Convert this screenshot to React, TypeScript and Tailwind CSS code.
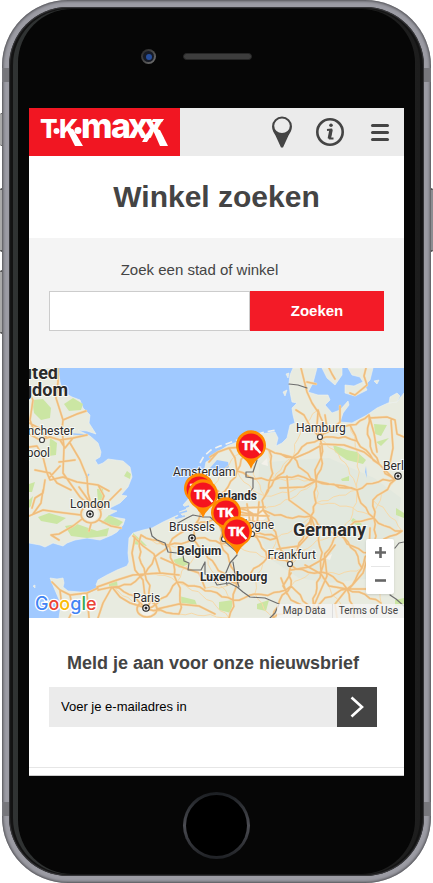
import React from "react";

type Point = [number, number];

const CITIES: Record<string, Point> = {
  amsterdam: [185, 117], groningen: [222, 76], zwolle: [208, 103], utrecht: [190, 127],
  rotterdam: [172, 134], antwerp: [166, 157], brussels: [164, 171], lille: [140, 177],
  calais: [112, 167], rouen: [84, 219], amiens: [116, 206], paris: [118, 241],
  reims: [148, 214], liege: [192, 176], eindhoven: [190, 148], cologne: [223, 166],
  ruhr: [224, 146], munster: [236, 128], osnabruck: [245, 112], bremen: [264, 89],
  hamburg: [291, 71], kiel: [289, 42], hannover: [287, 113], lubeck: [304, 60],
  rostock: [340, 47], berlin: [366, 112], magdeburg: [328, 122], leipzig: [345, 150],
  erfurt: [310, 166], kassel: [282, 148], frankfurt: [262, 197], mannheim: [262, 218],
  koblenz: [238, 190], luxembourg: [208, 216], metz: [204, 232], saarbrucken: [226, 226],
  wurzburg: [292, 204], nuremberg: [318, 221], stuttgart: [283, 242], siegen: [248, 170],
  namur: [176, 184], nancy: [200, 250], troyes: [150, 246], bayreuth: [333, 200],
  hof: [341, 185], dresden: [373, 163], strasbourg: [244, 250], munich: [325, 250],
  regensburg: [352, 235], emden: [240, 82], dortmund: [234, 142], gottingen: [287, 135],
  wismar: [321, 57], schwerin: [328, 73], dessau: [344, 132], neuruppin: [350, 96],
};

const LINKS: string[] = [
  "amsterdam-utrecht", "amsterdam-rotterdam", "rotterdam-utrecht", "utrecht-zwolle",
  "zwolle-groningen", "groningen-emden", "utrecht-eindhoven", "rotterdam-antwerp",
  "antwerp-brussels", "antwerp-eindhoven", "eindhoven-ruhr", "antwerp-lille",
  "brussels-lille", "lille-calais", "calais-amiens", "amiens-paris", "lille-amiens",
  "lille-reims", "reims-paris", "rouen-amiens", "rouen-paris", "brussels-namur",
  "namur-luxembourg", "brussels-liege", "liege-cologne", "eindhoven-liege",
  "liege-luxembourg", "luxembourg-metz", "metz-nancy", "metz-saarbrucken", "metz-reims",
  "reims-troyes", "saarbrucken-mannheim", "mannheim-frankfurt", "mannheim-stuttgart",
  "mannheim-strasbourg", "koblenz-frankfurt", "koblenz-cologne", "koblenz-luxembourg",
  "cologne-ruhr", "ruhr-dortmund", "dortmund-munster", "munster-osnabruck",
  "osnabruck-bremen", "bremen-hamburg", "hamburg-kiel", "hamburg-lubeck", "lubeck-wismar",
  "wismar-rostock", "hamburg-hannover", "bremen-hannover", "hannover-magdeburg",
  "magdeburg-berlin", "hannover-osnabruck", "osnabruck-zwolle", "utrecht-ruhr",
  "emden-bremen", "emden-munster", "dortmund-kassel", "kassel-gottingen",
  "gottingen-hannover", "kassel-erfurt", "erfurt-leipzig", "leipzig-dessau",
  "dessau-berlin", "leipzig-magdeburg", "leipzig-dresden", "berlin-neuruppin",
  "neuruppin-schwerin", "schwerin-hamburg", "neuruppin-rostock", "schwerin-wismar",
  "kassel-frankfurt", "kassel-wurzburg", "frankfurt-wurzburg", "wurzburg-nuremberg",
  "wurzburg-stuttgart", "nuremberg-bayreuth", "bayreuth-hof", "hof-leipzig",
  "nuremberg-munich", "nuremberg-regensburg", "stuttgart-strasbourg", "siegen-cologne",
  "siegen-frankfurt", "siegen-dortmund", "erfurt-bayreuth", "erfurt-hof",
  "stuttgart-nuremberg", "paris-troyes", "dresden-hof", "cologne-siegen", "erfurt-wurzburg",
];

const MINOR_LINKS: string[] = [
  "lille-namur", "calais-lille", "amiens-reims", "reims-luxembourg", "troyes-nancy",
  "reims-nancy", "namur-reims", "saarbrucken-koblenz", "saarbrucken-strasbourg",
  "siegen-kassel", "siegen-koblenz", "kassel-hannover", "hannover-dortmund",
  "osnabruck-hannover", "bremen-osnabruck", "bremen-kiel", "magdeburg-wismar",
  "gottingen-magdeburg", "gottingen-leipzig", "erfurt-magdeburg", "bayreuth-wurzburg",
  "regensburg-hof", "wurzburg-munich", "munster-zwolle", "groningen-munster",
  "liege-koblenz", "dessau-dresden", "berlin-leipzig", "hamburg-magdeburg",
  "munster-hannover", "emden-osnabruck", "mannheim-wurzburg", "rouen-troyes",
  "amsterdam-groningen", "rotterdam-eindhoven", "namur-metz", "frankfurt-erfurt",
];

const TRACED_ROADS: string[] = [
  "M29 0L29 14L27 30L34 52L33 62L35 79L34 105L41 115L51 129L60 137",
  "M0 25L4 32L1 52L6 66",
  "M0 66L11 72L21 69L31 72L44 70L58 67",
  "M0 79L8 78L14 89L18 105L21 112L34 109L48 114L69 117L80 123",
  "M6 102L21 105L28 115L42 122M31 98L20 110M41 75L51 92L58 109L59 125L62 136",
  "M16 112L14 125L6 130L3 140M34 52L48 46L57 43M0 55L10 60L18 70M46 92L30 94",
  "M62 136L55 126L50 119M52 147L28 144L14 142L0 148M72 141L82 131L92 121",
  "M70 152L82 158L92 160M62 156L60 163M53 151L44 158L30 166L22 167L30 172",
  "M52 146a10 9 0 1 0 20 0a10 9 0 1 0 -20 0",
  "M14 122L12 135L4 146M69 117L75 128L70 140M31 72L36 80L44 70",
  "M106 169L103 185L106 202L114 212L116 229M104 168L114 178L125 186L131 205",
  "M68 219L88 212L104 207L131 205L150 207",
  "M23 214L31 222L41 227L58 225L69 220M69 222L83 219L91 229L101 235L114 239",
  "M83 219L74 235L69 250M31 222L33 240M41 227L44 242L40 250M58 226L60 250",
  "M108 241a10 8 0 1 0 20 0a10 8 0 1 0 -20 0",
  "M128 241L150 236L170 238L186 246M132 190L150 198L170 205L176 220",
  "M181 89L189 84L200 80L215 79L232 80M189 84L180 94M200 80L206 90L208 103",
  "M212 140L236 139M210 147L240 148M214 153L238 154M218 136L222 160M230 134L228 158",
  "M272 0L275 12L278 24L283 35L289 44L288 58L291 70M278 14L287 16",
  "M267 42L275 47L281 58L291 70M296 47L298 60L304 60M311 38L311 54L304 60",
  "M300 0L303 6L306 11M337 0L335 8L338 17L326 27L321 25",
  "M291 78L280 84L266 90L251 86M291 78L292 90L286 102L287 113M291 76L315 77L335 84L350 96L366 112",
  "M340 47L345 65L348 84M340 50L358 49L366 52L368 66L375 69M362 52L364 80L360 100",
  "M251 120L275 119L287 113L300 116L315 118L328 122M258 108L260 132L282 148",
  "M276 197L292 206L300 218L318 221M262 205L254 218L262 232L283 242M252 210L258 226",
  "M262 202L280 199L296 190L306 177M248 181L270 178L282 165L282 148M296 190L298 208L283 242",
  "M318 221L345 221L361 224M320 221L334 205L340 185L341 160M318 221L306 236L308 250",
];

const GREENS: string[] = [
  "M3 32L14 31L22 40L21 50L12 52L5 45Z", "M35 36L44 30L54 36L52 42L40 43Z",
  "M21 70L28 75L27 87L20 88Z", "M9 149L20 145L37 150L28 156L12 153Z",
  "M36 158L48 156L68 163L80 160L78 168L58 170L42 168Z", "M68 121L74 120L75 134L69 134Z",
  "M80 147L94 154L88 160L72 155Z", "M104 165L112 172L118 178L104 176Z",
  "M80 215L88 213L89 221L80 221Z", "M98 103L102 106L101 111L95 108Z",
  "M144 192L154 189L160 196L150 200Z", "M150 228L166 232L168 237L152 235Z",
  "M190 234L204 232L202 245L190 242Z", "M228 236L240 232L237 243L228 241Z",
  "M304 77L318 82L328 84L337 92L334 96L318 92L306 84Z",
  "M345 56L358 57L352 68L346 66Z", "M347 74L360 70L352 78Z",
  "M367 140L375 145L375 150L367 147Z", "M324 150L333 156L330 159L322 153Z",
  "M366 232L375 230L375 238L366 238Z", "M312 111L320 108L320 113L313 113Z",
  "M0 0L8 0L6 6L0 8Z", "M0 116L6 114L3 124L0 124Z", "M0 132L4 128L2 138L0 140Z",
];

const PINS: Point[] = [[222, 78], [170, 121], [174, 127], [197, 145], [208, 164]];

/** Bends a straight link between two cities into a meandering motorway. */
function meander(link: string, index: number): string {
  const [from, to] = link.split("-").map((name) => CITIES[name]);
  const dx = to[0] - from[0];
  const dy = to[1] - from[1];
  const length = Math.hypot(dx, dy);
  const steps = Math.max(3, Math.round(length / 6));
  let d = `M${from[0]} ${from[1]}`;
  for (let i = 1; i <= steps; i++) {
    const t = i / steps;
    const bow = Math.sin(t * Math.PI) * Math.sin(index * 2.4) * length * 0.1;
    const jitter = i === steps ? 0 : Math.sin(i * 2.1 + index * 1.7) * 1.2;
    const offset = (bow + jitter) / length;
    d += `L${(from[0] + dx * t - dy * offset).toFixed(1)} ${(from[1] + dy * t + dx * offset).toFixed(1)}`;
  }
  return d;
}

const ROADS = [...TRACED_ROADS, ...LINKS.map(meander)].join("");
const MINOR_ROADS = MINOR_LINKS.map(meander).join("");

const UK =
  "M0 0L29 0L31 14L34 24L43 29L51 32L54 40L61 47L60 55L67 66L58 63L49 62L61 68L69 75L72 84L71 89L66 92L69 97L74 95L79 91L94 93L101 99L103 109L99 119L92 127L98 128L91 135L79 141L88 143L78 148L96 151L94 157L88 164L83 167L71 172L58 170L46 172L38 175L34 178L24 175L16 179L11 177L0 175Z";
const CONTINENT =
  "M21 210L28 211L34 210L35 215L34 219L39 223L51 224L63 224L71 220L67 217L69 212L78 207L88 202L98 198L100 194L99 185L100 170L104 165L114 162L123 160L134 154L149 147L146 152L155 149L150 144L158 141L154 137L162 128L170 118L175 104L177 94L181 92L189 84L198 78L208 74L231 66L246 64L249 70L247 78L253 75L258 70L261 57L266 55L264 47L263 40L268 35L263 34L261 24L260 15L261 7L264 0L288 0L284 15L279 24L289 27L299 27L301 32L296 37L303 45L311 42L319 33L320 37L314 45L311 54L323 55L338 47L348 40L359 35L368 34L375 25L375 250L30 250L32 236L26 222Z";
const ISLANDS =
  "M293 0L313 0L313 7L306 17L298 10ZM319 0L344 0L341 12L336 17L331 9L323 7ZM316 17L325 18L334 14L338 22L326 28L316 25ZM345 13L350 12L348 16ZM361 29L368 25L371 28L368 34L360 35ZM254 24L258 22L256 28ZM257 6L260 5L259 10ZM4 218L6 217L6 220Z";
const BORDERS =
  "M228 92L224 104L217 104L217 109L224 110L224 120L220 125L206 130L208 142L202 152L194 160L195 172M121 160L123 168L128 172L136 175L139 184L148 185L154 187L155 193L160 195L159 202L172 202L176 194L176 206L184 210L188 217L200 215L208 219L214 224L221 229L236 230L250 236L246 245L241 250M208 187L201 195L196 207L198 217M204 194L206 206L210 219M149 155L158 150L164 147L174 149L181 149L193 159L194 172L208 184M260 16L269 17L278 20M375 174L370 175L366 180M361 227L367 231L375 238";

interface MapLabelProps {
  x: number;
  y: number;
  children: string;
  kind?: "city" | "country" | "large";
  end?: boolean;
}

function MapLabel({ x, y, children, kind = "city", end = false }: MapLabelProps) {
  const style = {
    city: "text-[12px] font-normal",
    country: "text-[12px] font-bold",
    large: "text-[18px] font-bold",
  }[kind];
  return (
    <text
      x={x}
      y={y}
      textAnchor={end ? "end" : "start"}
      fill="#2b2b2b"
      stroke="#fff"
      strokeOpacity="0.75"
      strokeWidth="2"
      paintOrder="stroke"
      className={style}
    >
      {children}
    </text>
  );
}

function StoreMap() {
  return (
    <svg
      viewBox="0 0 375 250"
      preserveAspectRatio="xMidYMid slice"
      role="img"
      aria-label="Kaart met winkels"
      className="block h-full w-full font-[Roboto,sans-serif]"
    >
      <rect width="375" height="250" fill="#a0c9ff" />
      <g fill="#e8ebe0" stroke="#f2f3ec" strokeWidth="0.6">
        <path d={UK} />
        <path d={CONTINENT} />
        <path d={ISLANDS} />
      </g>
      <path d="M230 95L262 92L300 90L345 110L372 130L368 165L345 210L300 215L270 210L240 190L228 160Z" fill="#e2e8de" />
      <path d="M188 92L199 94L200 99L193 105L184 107L181 100ZM337 98L338 110L336 104Z" fill="#a0c9ff" />
      <path d="M171 95L175 88L182 82L191 78L200 75L214 70L236 64L248 62" fill="none" stroke="#f4f3ee" strokeWidth="1.6" strokeDasharray="7 4" />
      <path d="M148 146L158 143M151 141L160 138M146 150L156 148M57 110L60 106M44 66L58 67" fill="none" stroke="#a0c9ff" strokeWidth="1.5" />
      <g fill="#cbe6a3">
        {GREENS.map((d) => (
          <path key={d} d={d} />
        ))}
      </g>
      <g fill="#f3f1ea">
        <circle cx="62" cy="146" r="7" />
        <circle cx="118" cy="241" r="7" />
        <ellipse cx="226" cy="146" rx="12" ry="8" />
        <path d="M232 96L238 90L239 98ZM295 190L303 186L301 192ZM18 107L26 110L22 114Z" />
      </g>
      <g fill="none" strokeLinejoin="round" strokeLinecap="round">
        <path d={MINOR_ROADS} stroke="#f7d9a8" strokeWidth="1" />
        <path d={ROADS} stroke="#f6dcb0" strokeWidth="2.4" />
        <path d={ROADS} stroke="#efbd7e" strokeWidth="1.5" />
        <path d={BORDERS} stroke="#6e6e6e" strokeWidth="1.2" />
      </g>
      <g fill="#fff" stroke="#444" strokeWidth="1.2">
        {([[13, 72], [291, 69], [261, 196], [223, 166], [195, 171]] as Point[]).map(([x, y]) => (
          <circle key={x} cx={x} cy={y} r="2.5" />
        ))}
      </g>
      {([[61, 146], [117, 240], [163, 170], [369, 108]] as Point[]).map(([x, y]) => (
        <g key={x}>
          <circle cx={x} cy={y} r="3.2" fill="#fff" stroke="#222" strokeWidth="1.2" />
          <circle cx={x} cy={y} r="1.5" fill="#222" />
        </g>
      ))}
      <MapLabel x={29} y={11} kind="large" end>United</MapLabel>
      <MapLabel x={39} y={28} kind="large" end>Kingdom</MapLabel>
      <MapLabel x={45} y={67} end>Manchester</MapLabel>
      <MapLabel x={21} y={89} end>Liverpool</MapLabel>
      <MapLabel x={41} y={140}>London</MapLabel>
      <MapLabel x={104} y={234}>Paris</MapLabel>
      <MapLabel x={144} y={108}>Amsterdam</MapLabel>
      <MapLabel x={228} y={132} kind="country" end>Netherlands</MapLabel>
      <MapLabel x={140} y={163}>Brussels</MapLabel>
      <MapLabel x={148} y={187} kind="country">Belgium</MapLabel>
      <MapLabel x={171} y={213} kind="country">Luxembourg</MapLabel>
      <MapLabel x={245} y={161} end>Cologne</MapLabel>
      <MapLabel x={267} y={64}>Hamburg</MapLabel>
      <MapLabel x={354} y={102}>Berlin</MapLabel>
      <MapLabel x={264} y={168} kind="large">Germany</MapLabel>
      <MapLabel x={287} y={191} end>Frankfurt</MapLabel>
      {PINS.map(([x, y]) => (
        <g key={x} transform={`translate(${x} ${y})`}>
          <path d="M0 23Q-2 17-8 12A15 15 0 1 1 8 12Q2 17 0 23Z" fill="#ff8a00" />
          <circle r="12.5" fill="#f5141f" />
          <text x="-9" y="4" fill="#fff" stroke="#fff" strokeWidth="0.5" className="font-[Inter,sans-serif] text-[12px] font-extrabold">TK</text>
          <path d="M4 1L9.500 7" stroke="#fff" strokeWidth="2.4" />
        </g>
      ))}
    </svg>
  );
}

function GoogleLogo() {
  return (
    <svg viewBox="0 0 72 26" role="img" aria-label="Google" className="h-[26px] w-[72px]">
      <text x="2" y="18" stroke="#fff" strokeWidth="2.5" strokeLinejoin="round" paintOrder="stroke" className="font-[Inter,sans-serif] text-[18px] font-medium">
        <tspan fill="#4285f4">G</tspan>
        <tspan fill="#ea4335">o</tspan>
        <tspan fill="#fbbc05">o</tspan>
        <tspan fill="#4285f4">g</tspan>
        <tspan fill="#34a853">l</tspan>
        <tspan fill="#ea4335">e</tspan>
      </text>
    </svg>
  );
}

function BrandLogo() {
  return (
    <svg viewBox="0 0 151 48" role="img" aria-label="T.K. Maxx" className="h-12 w-[151px]">
      <g fill="#fff" className="font-[Inter,sans-serif] font-extrabold">
        <text y="30" className="text-[26px]">
          <tspan x="11">T</tspan>
          <tspan x="30">K</tspan>
        </text>
        <text y="30" className="text-[34px]">
          <tspan x="52">m</tspan>
          <tspan x="82">a</tspan>
          <tspan x="99">x</tspan>
          <tspan x="115">x</tspan>
        </text>
      </g>
      <path d="M38 22L44 21L54 38L46 38ZM124 22L131 22L139 38L131 38ZM113 34L118 34L123 26L118 25ZM124 11L135 11L133 14L122 14Z" fill="#fff" />
      <circle cx="27.500" cy="23" r="3" fill="#fff" />
      <circle cx="49" cy="22.500" r="3.500" fill="#fff" />
    </svg>
  );
}

function Header() {
  return (
    <header className="flex h-12 items-center justify-between bg-[#ebebeb] pr-3">
      <a href="#home" className="block bg-[#f11622]">
        <BrandLogo />
      </a>
      <nav aria-label="Hoofdmenu" className="flex items-center gap-6 text-[#444]">
        <a href="#winkels" aria-label="Winkels">
          <svg viewBox="0 0 20 32" className="block h-8 w-5">
            <path d="M10 0.500A10 10 0 0 0 0 10.500C0 14 2 17 3.500 19.500L9 31.500H11L16.500 19.500C18 17 20 14 20 10.500A10 10 0 0 0 10 0.500ZM10 2.500A7.800 7.300 0 1 1 10 17.100A7.800 7.300 0 1 1 10 2.500Z" fill="currentColor" fillRule="evenodd" />
          </svg>
        </a>
        <a href="#info" aria-label="Informatie">
          <svg viewBox="0 0 28 28" className="block size-7" fill="none" stroke="currentColor">
            <circle cx="14" cy="14" r="12.700" strokeWidth="2.600" />
            <circle cx="15" cy="7.200" r="1.800" fill="currentColor" stroke="none" />
            <path d="M11 12L15.500 11.500L13.500 20.500H17.500" strokeWidth="2" strokeLinejoin="round" />
            <path d="M15 12L13.300 20.500" strokeWidth="3.400" />
          </svg>
        </a>
        <button type="button" aria-label="Menu" className="flex w-6 flex-col items-center gap-1">
          <span className="h-[3px] w-[18px] rounded-xs bg-[#444]" />
          <span className="h-[3px] w-[18px] rounded-xs bg-[#444]" />
          <span className="h-[3px] w-[18px] rounded-xs bg-[#444]" />
        </button>
      </nav>
    </header>
  );
}

function Screen() {
  return (
    <main className="bg-white font-['Liberation_Sans',Arial,sans-serif] text-[#444]">
      <Header />
      <h1 className="py-[22px] text-center text-[30px] leading-[38px] font-bold">Winkel zoeken</h1>

      <form className="bg-[#f4f4f4] px-5 pt-5 pb-[37px]" onSubmit={(e) => e.preventDefault()}>
        <label htmlFor="store" className="mb-[9px] block pr-[34px] text-center text-[15px] leading-6">
          Zoek een stad of winkel
        </label>
        <div className="flex h-10">
          <input id="store" type="text" className="w-3/5 border border-[#ccc] bg-white px-3 text-[15px] outline-none" />
          <button type="submit" className="w-2/5 bg-[#f31b27] text-[15px] font-bold text-white">Zoeken</button>
        </div>
      </form>

      <section aria-label="Winkelkaart" className="relative h-[250px] overflow-hidden">
        <StoreMap />
        <div className="absolute bottom-0 left-1">
          <GoogleLogo />
        </div>
        <div className="absolute right-0 bottom-0 flex h-[14px] items-center bg-[#f5f5f5]/80 font-[Roboto,sans-serif] text-[10px] leading-[14px] text-[#444]">
          <span className="px-[6px]">Map Data</span>
          <a href="#terms" className="border-l border-[#ddd] px-[6px]">Terms of Use</a>
        </div>
        <div className="absolute right-[10px] bottom-6 flex w-7 flex-col items-center rounded-xs bg-white shadow">
          <button type="button" aria-label="Inzoomen" className="flex h-[27px] w-7 items-center justify-center">
            <svg viewBox="0 0 11 11" className="size-[11px]"><path d="M5.500 0V11M0 5.500H11" stroke="#666" strokeWidth="2.600" /></svg>
          </button>
          <span className="h-px w-[19px] bg-[#e6e6e6]" />
          <button type="button" aria-label="Uitzoomen" className="flex h-[27px] w-7 items-center justify-center">
            <svg viewBox="0 0 11 11" className="size-[11px]"><path d="M0 5.500H11" stroke="#666" strokeWidth="2.600" /></svg>
          </button>
        </div>
      </section>

      <form className="border-b border-[#e6e6e6] pt-[33px] pr-[27px] pb-10 pl-5" onSubmit={(e) => e.preventDefault()}>
        <label htmlFor="email" className="mb-3 block text-center text-[18px] leading-6 font-bold whitespace-nowrap">
          Meld je aan voor onze nieuwsbrief
        </label>
        <div className="flex h-10">
          <input
            id="email"
            type="email"
            placeholder="Voer je e-mailadres in"
            className="min-w-0 flex-1 bg-[#ebebeb] px-3 text-[13px] text-black outline-none placeholder:text-black"
          />
          <button type="submit" aria-label="Aanmelden" className="flex w-10 items-center justify-center bg-[#444]">
            <svg viewBox="0 0 14 22" className="h-[22px] w-[14px]">
              <path d="M1.500 1.500L12 11L1.500 20.500" fill="none" stroke="#fff" strokeWidth="2.600" />
            </svg>
          </button>
        </div>
      </form>
      <div className="h-2 border-b border-[#ccc]" />
    </main>
  );
}

export default function App() {
  return (
    <div className="relative bg-white px-[2px]">
      <span className="absolute top-[113px] left-0 h-[33px] w-1 rounded-l-xs border-y border-[#555] bg-[#aaa]" />
      <span className="absolute top-[188px] left-0 h-16 w-1 rounded-l-xs border-y-2 border-[#555] bg-[#aaa]" />
      <span className="absolute top-[270px] left-0 h-16 w-1 rounded-l-xs border-y-2 border-[#555] bg-[#aaa]" />
      <span className="absolute top-[188px] right-0 h-16 w-1 rounded-r-xs border-y-2 border-[#555] bg-[#8d8d92]" />

      <div className="relative overflow-hidden rounded-[66px] bg-[#9c9ca4] p-[7px] shadow-[inset_0_0_3px_1px_#4c4c50]">
        <span className="absolute inset-x-0 top-[68px] h-[14px] bg-[#77777c]" />
        <span className="absolute inset-x-0 bottom-[67px] h-[14px] bg-[#77777c]" />
        <div className="relative rounded-[59px] bg-[#131313] px-1 py-[2px] shadow-[inset_0_0_1px_1px_#3a3a3d]">
          <div className="rounded-[56px] bg-linear-to-r from-[#303333] to-[#1d1d1d] px-[5px]">
            <div className="rounded-[54px] bg-[#060606] px-[11px]">
              <div className="flex h-[99px] items-center justify-center pr-10 pb-1">
                <div className="flex items-center gap-[27px]">
                  <span className="flex size-[15px] items-center justify-center rounded-full bg-linear-to-br from-[#222] to-[#777]">
                    <span className="flex size-[11px] items-center justify-center rounded-full bg-[#161a25]">
                      <span className="size-[6px] rounded-full bg-[#264d9a]" />
                    </span>
                  </span>
                  <span className="h-[7px] w-[69px] rounded-full border border-[#262626] bg-[#3d3d3d]" />
                </div>
              </div>
              <Screen />
              <div className="flex h-[98px] items-center justify-center">
                <button
                  type="button"
                  aria-label="Thuisknop"
                  className="size-[67px] rounded-full bg-linear-to-b from-[#1b1e22] via-[#4b4c52] to-[#1f2125] p-[3px]"
                >
                  <span className="block size-full rounded-full bg-black" />
                </button>
              </div>
            </div>
          </div>
        </div>
      </div>
    </div>
  );
}
